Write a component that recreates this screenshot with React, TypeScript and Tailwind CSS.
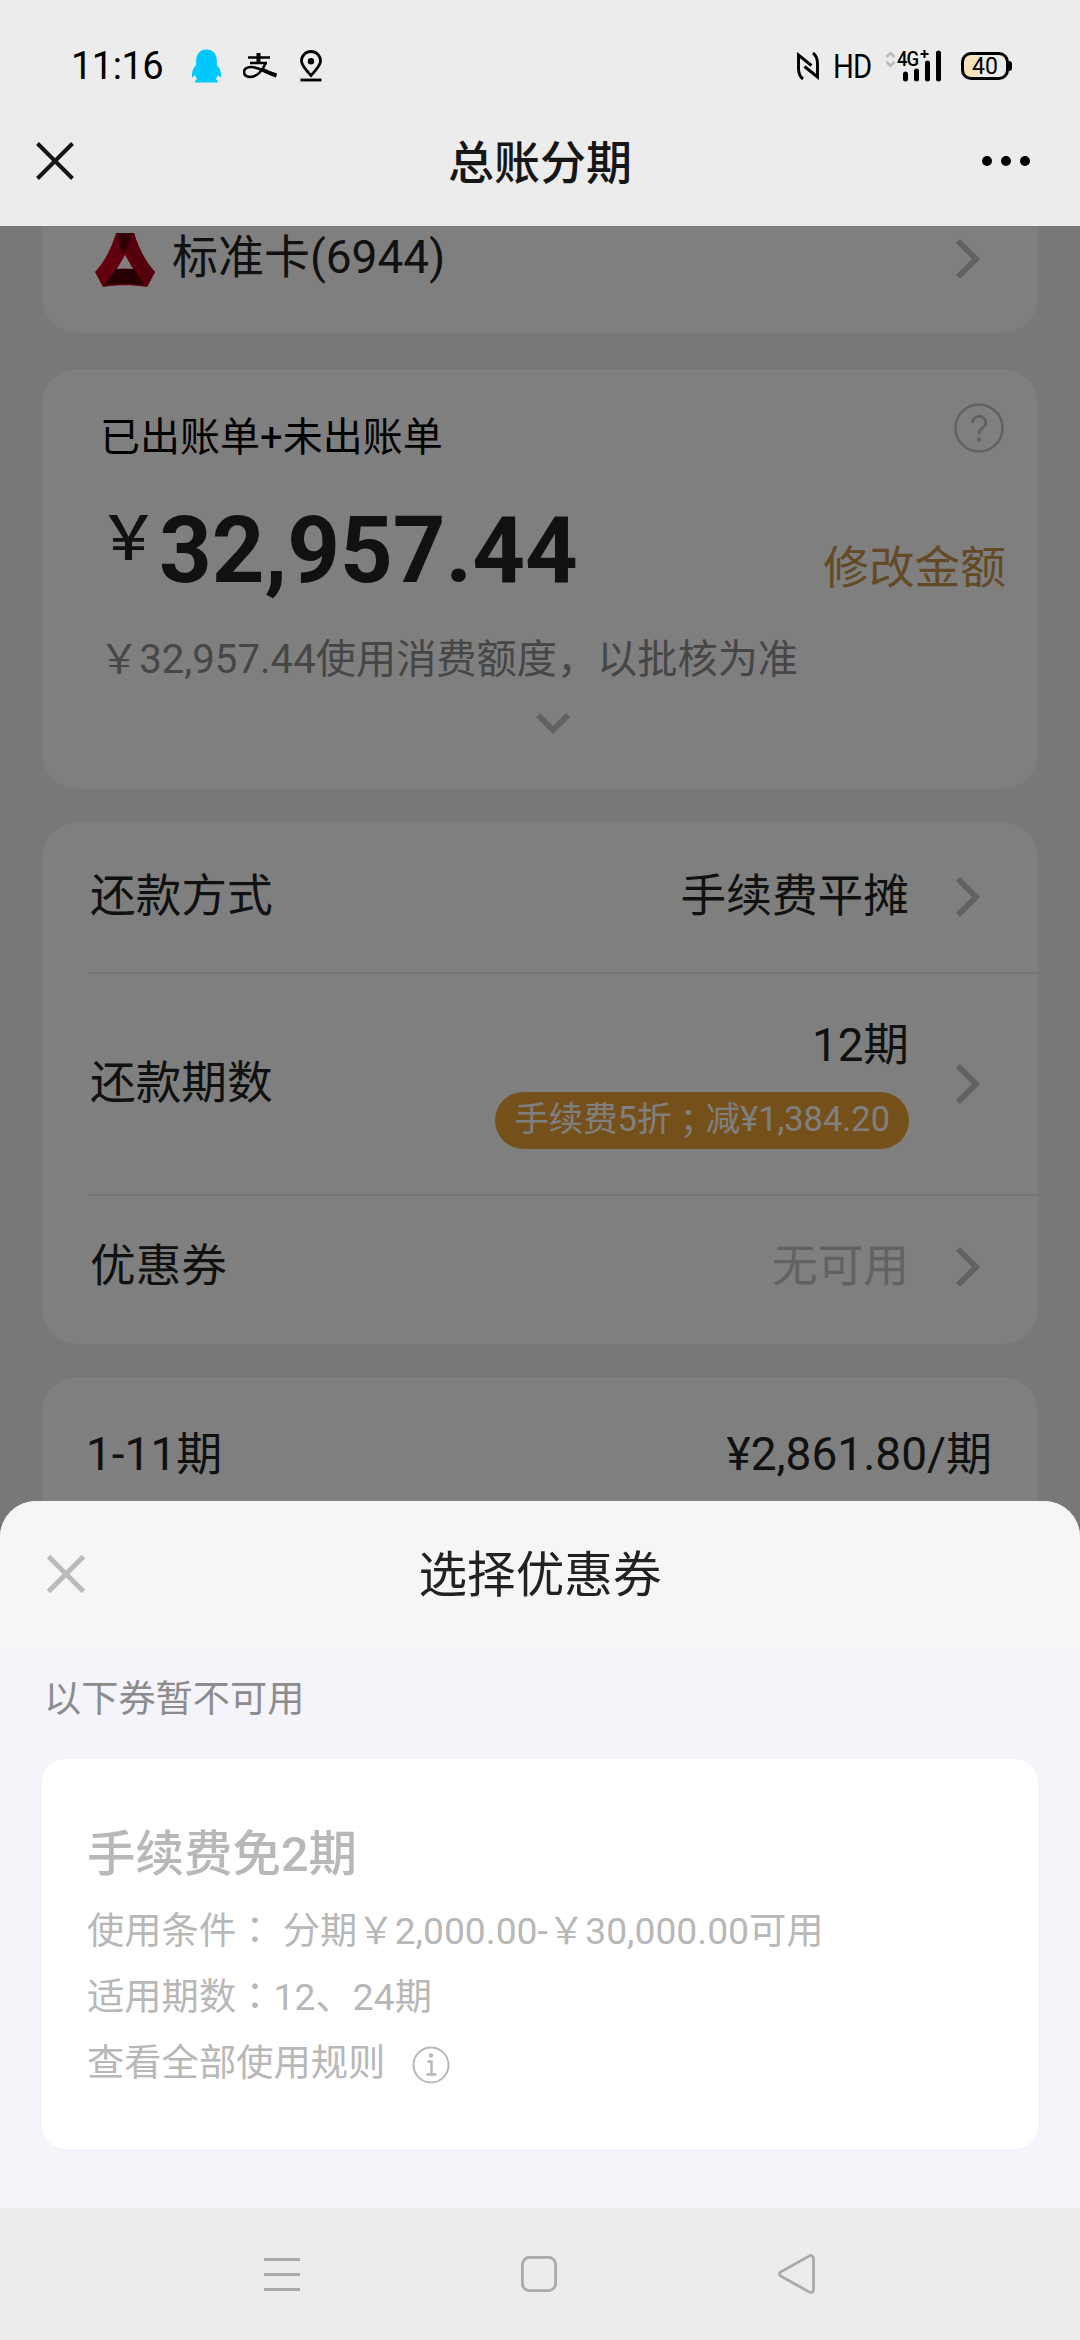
import type { ReactNode } from "react"

interface SettingRowProps {
  label: string
  className: string
  children: ReactNode
}

function ChevronRight() {
  return (
    <svg className="block h-[42px] w-[26px] shrink-0" viewBox="0 0 26 42" fill="none" stroke="#c4c4c4" strokeWidth="6">
      <path d="M3 3l18 18L3 39" />
    </svg>
  )
}

function CloseIcon({ className }: { className: string }) {
  return (
    <svg className={className} viewBox="0 0 38 38" fill="none" stroke="currentColor">
      <path d="M1.5 1.5l35 35M36.5 1.5l-35 35" />
    </svg>
  )
}

// Traditional glyphs keep the colon and semicolon in the middle of the em box
function CenteredMark({ children }: { children: ReactNode }) {
  return (
    <span lang="zh-TW" className="leading-none font-['Noto_Sans_CJK_TC',sans-serif]">
      {children}
    </span>
  )
}

function StatusBar() {
  return (
    <div className="flex h-[92px] items-center justify-between pt-[40px] pr-[68px] pl-[71px] text-black">
      <div className="flex items-center">
        <span className="w-[98px] text-[38px] leading-none tracking-[-0.5px]">11:16</span>
        <svg className="ml-[22px] h-[34px] w-[31px]" viewBox="0 0 32 34" fill="#00c8ff">
          <path d="M16 0C9 0 5.300 5 5.300 12v4C2.500 19 0.500 23 1 28.500c1 .2 2-.8 3-2.500.5 2 1.600 3.500 2.800 4.500C5 31.200 4 32.500 4.500 34h23c.5-1.500-.5-2.800-2.300-3.500 1.200-1 2.300-2.500 2.800-4.500 1 1.700 2 2.700 3 2.500.5-5.500-1.500-9.500-4.300-12.500v-4C26.700 5 23 0 16 0z" />
        </svg>
        {/* Alipay mark */}
        <svg className="ml-[21px] h-[26px] w-[34px]" viewBox="0 0 34 26" fill="none" stroke="#000" strokeWidth="2.300">
          <path d="M5 4.500h22M7 10h17" />
          <path d="M15.500 0v10" strokeWidth="4" />
          <path d="M23 9.500C20 17 14 24 7 24c-4 0-6-2.200-6-5 0-3 3-5 7-5 8 0 14 5 25 8.500" strokeWidth="2.600" />
          <path d="M20 17c4 2 8 3.700 13.500 5.500" strokeWidth="4" />
        </svg>
        <svg className="ml-[22px] h-[32px] w-[24px]" viewBox="0 0 24 32" fill="none" stroke="#000" strokeWidth="2.800">
          <path d="M12 25.500C7 20 2.500 15.500 2.500 11a9.500 9.500 0 0 1 19 0c0 4.500-4.500 9-9.500 14.500z" />
          <circle cx="12" cy="11.300" r="3.200" fill="#000" stroke="none" />
          <path d="M1.500 30h21" />
        </svg>
      </div>

      <div className="flex items-center">
        <svg className="h-[28px] w-[22px]" viewBox="0 0 22 28" fill="none" stroke="#000" strokeWidth="2.900">
          <path d="M6 27C2.500 24.500 1.500 21 1.500 16V3l13 10.500M16 1c3.500 2.500 4.500 6 4.500 11v13l-13-10.500" />
        </svg>
        <span className="ml-[14px] inline-block w-[40px] origin-left scale-x-[0.86] text-[34px] leading-none tracking-[-1px] whitespace-nowrap">
          HD
        </span>
        <div className="relative ml-[12px] h-[32px] w-[60px]">
          <svg className="h-[32px] w-[60px]" viewBox="0 0 60 32" fill="none">
            <path d="M1.500 7l4-4 4 4M1.500 12l4 4 4-4" stroke="#bbb" strokeWidth="2.500" />
            <path d="M20.500 24v5M31.500 21v8M42.500 13v16M53.500 3v26" stroke="#000" strokeWidth="5" strokeLinecap="round" />
            <path d="M35.500 4h8M39.500 0v8" stroke="#000" strokeWidth="2" />
          </svg>
          <span className="absolute top-[-1px] left-[12px] origin-left scale-x-[0.88] text-[21px] leading-[20px] font-medium tracking-[-1px]">
            4G
          </span>
        </div>
        <div className="ml-[16px] flex h-[28px] w-[48px] items-center justify-center rounded-[10px] border-[3px] border-black bg-linear-to-r from-[#f7e3bb] from-25% to-[#ececec] to-45% text-[23px] leading-none">
          40
        </div>
        <span className="h-[10px] w-[3px] rounded-r bg-black" />
      </div>
    </div>
  )
}

function TitleBar() {
  return (
    <div className="grid h-[134px] grid-cols-[1fr_auto_1fr] items-center pt-[4px] pr-[50px] pl-[36px]">
      <CloseIcon className="h-[38px] w-[38px] stroke-4 text-[#161616]" />
      <h1 className="mt-[3px] mr-[-14px] text-[46px] leading-none font-medium text-[#161616]">总账分期</h1>
      <div className="flex justify-end gap-[9px]">
        <span className="h-[10px] w-[10px] rounded-full bg-black" />
        <span className="h-[10px] w-[10px] rounded-full bg-black" />
        <span className="h-[10px] w-[10px] rounded-full bg-black" />
      </div>
    </div>
  )
}

function BankLogo() {
  return (
    <svg className="h-[54px] w-[60px]" viewBox="0 0 60 54">
      <path d="M21 0h18c4.500 15 11 28 21 39l-8 15c-14-2.500-30-2.500-44 0L0 39C10 28 16.500 15 21 0z" fill="#c6001c" />
      <path d="M38 0h1c4.500 15 11 28 21 39l-8 15L29 13z" fill="#a80018" />
      <path d="M23 0h15l-9 22-3-4c-2-6-3-12-3-18z" fill="#64000b" />
      <path d="M21 36h18l11 16.500c-13-2-27-2-41 0z" fill="#4e0006" />
      <path d="M30 22l8 14c-5-.8-11-.8-16 0z" fill="#fff" />
    </svg>
  )
}

function SettingRow({ label, className, children }: SettingRowProps) {
  return (
    <div className={`ml-[46px] flex items-center justify-between pr-[57px] pl-[2px] ${className}`}>
      <span className="text-[45.7px] leading-[60px]">{label}</span>
      <div className="flex items-center gap-[46px]">
        <div className="flex flex-col items-end text-[45.7px]">{children}</div>
        <ChevronRight />
      </div>
    </div>
  )
}

function InstallmentPage() {
  return (
    <div className="flex flex-col px-[42px] text-[#222]">
      <section className="flex h-[107px] items-start justify-between rounded-b-[36px] bg-white pt-[7px] pr-[57px] pl-[53px]">
        <div className="flex">
          <BankLogo />
          <span className="mt-[1px] ml-[17px] text-[46px] leading-[46px]">标准卡(6944)</span>
        </div>
        <div className="mt-[5px]">
          <ChevronRight />
        </div>
      </section>

      <section className="mt-[36px] h-[420px] rounded-[36px] bg-white pr-[32px] pl-[58px]">
        <div className="flex items-start justify-between pt-[34px]">
          <span className="mt-[8px] text-[40px] leading-[54px] text-black">已出账单+未出账单</span>
          <svg className="mr-[2px] h-[50px] w-[50px]" viewBox="0 0 50 50" fill="none" stroke="#c4c4c4" strokeWidth="2.500">
            <circle cx="25" cy="25" r="23.500" />
            <path d="M18.500 20c0-4.500 3-6.500 6.700-6.500 3.800 0 6.800 2.300 6.800 6 0 5.300-7 5.300-7 11.500" strokeWidth="3" />
            <path d="M25 34.500v4" strokeWidth="3.500" />
          </svg>
        </div>
        <div className="mt-[31px] flex h-[110px] justify-between">
          <div className="flex items-start">
            <span className="mt-[9px] ml-[-2px] text-[61px] leading-[68px] font-medium">￥</span>
            <span className="text-[92px] leading-[110px] font-bold">32,957.44</span>
          </div>
          <span className="mt-[43px] text-[45.7px] leading-[60px] text-[#c6954b]">修改金额</span>
        </div>
        <p className="mt-[27px] ml-[-1px] text-[40.2px] leading-[54px] whitespace-nowrap text-[#8c8c8c]">￥32,957.44使用消费额度，以批核为准</p>
        <svg className="mt-[25px] ml-[436px] h-[24px] w-[34px]" viewBox="0 0 34 24" fill="none" stroke="#c4c4c4" strokeWidth="6">
          <path d="M2 3l15 15L32 3" />
        </svg>
      </section>

      <section className="mt-[33px] h-[522px] rounded-[36px] bg-white">
        <SettingRow label="还款方式" className="h-[152px] border-b-2 border-[#ececec]">
          <span className="leading-[60px]">手续费平摊</span>
        </SettingRow>
        <SettingRow label="还款期数" className="h-[222px] border-b-2 border-[#ececec]">
          <span className="mt-[-3px] leading-[60px]">12期</span>
          <span className="mt-[16px] flex h-[57px] items-center rounded-full bg-[#eaa036] px-[19px] pb-[2px] text-[34.4px] leading-none whitespace-nowrap text-white">
            手续费5折<CenteredMark>；</CenteredMark>减¥1,384.20
          </span>
        </SettingRow>
        <SettingRow label="优惠券" className="h-[142px]">
          <span className="leading-[60px] text-[#c4c4c4]">无可用</span>
        </SettingRow>
      </section>

      <section className="mt-[33px] flex h-[200px] justify-between rounded-t-[36px] bg-white pt-[47px] pr-[46px] pl-[44px] text-[46px] leading-[60px]">
        <span>1-11期</span>
        <span>¥2,861.80/期</span>
      </section>
    </div>
  )
}

function CouponSheet() {
  return (
    <div className="absolute inset-x-0 bottom-0 flex h-[707px] flex-col overflow-hidden rounded-t-[36px] bg-[#f4f4fa]">
      <div className="grid h-[147px] grid-cols-[1fr_auto_1fr] items-center bg-[#f6f6f6] pr-[47px] pl-[47px]">
        <CloseIcon className="mt-[-2px] h-[38px] w-[38px] stroke-5 text-[#bbb]" />
        <h2 className="mt-[4px] text-[48.6px] leading-none text-[#222]">选择优惠券</h2>
      </div>
      <p className="mt-[24px] pl-[44px] text-[37.2px] leading-[54px] text-[#8c8c8c]">以下券暂不可用</p>
      <div className="mx-[42px] mt-[33px] h-[390px] rounded-[24px] bg-white px-[45px] pt-[63px] text-[#b8b8b8]">
        <h3 className="text-[48.5px] leading-[66px] font-medium">手续费免2期</h3>
        <div className="mt-[10px] text-[37.3px] leading-[66px] whitespace-nowrap">
          <p>
            使用条件<CenteredMark>：</CenteredMark> 分期￥2,000.00-￥30,000.00可用
          </p>
          <p>
            适用期数<CenteredMark>：</CenteredMark>12、24期
          </p>
          <div className="flex items-center">
            <span>查看全部使用规则</span>
            <svg className="mt-[3px] ml-[27px] h-[38px] w-[38px]" viewBox="0 0 38 38" fill="none" stroke="currentColor" strokeWidth="2">
              <circle cx="19" cy="19" r="17.500" />
              <path d="M15.500 15.500h4v13M14.500 28.500h10" strokeWidth="2.500" />
              <circle cx="19" cy="9.500" r="2.300" fill="currentColor" stroke="none" />
            </svg>
          </div>
        </div>
      </div>
    </div>
  )
}

function NavBar() {
  return (
    <nav className="flex h-[132px] items-center justify-between bg-[#ececec] px-[264px] text-[#aaa]">
      <svg className="h-[40px] w-[36px]" viewBox="0 0 36 40" stroke="currentColor" strokeWidth="3">
        <path d="M0 5.500h36M0 20.500h36M0 35.500h36" />
      </svg>
      <svg className="h-[36px] w-[36px]" viewBox="0 0 36 36" fill="none" stroke="currentColor" strokeWidth="2.800">
        <rect x="1.400" y="1.400" width="33.200" height="33.200" rx="7" />
      </svg>
      <svg className="h-[40px] w-[38px]" viewBox="0 0 38 40" fill="none" stroke="currentColor" strokeWidth="2.800" strokeLinejoin="round">
        <path d="M3 17.700L31.500 1.900c2-1 4 .1 4 2.300v31.600c0 2.200-2 3.300-4 2.300L3 22.300c-2-1.200-2-3.400 0-4.600z" />
      </svg>
    </nav>
  )
}

export default function App() {
  return (
    <div className="flex h-[2340px] w-[1080px] flex-col overflow-hidden bg-[#ececec] font-['Roboto','Noto_Sans_CJK_SC',sans-serif]">
      <StatusBar />
      <TitleBar />
      <main className="relative h-[1982px] overflow-hidden bg-[#f0f0f0]">
        <InstallmentPage />
        <div className="absolute inset-0 bg-black/50" />
        <CouponSheet />
      </main>
      <NavBar />
    </div>
  )
}
